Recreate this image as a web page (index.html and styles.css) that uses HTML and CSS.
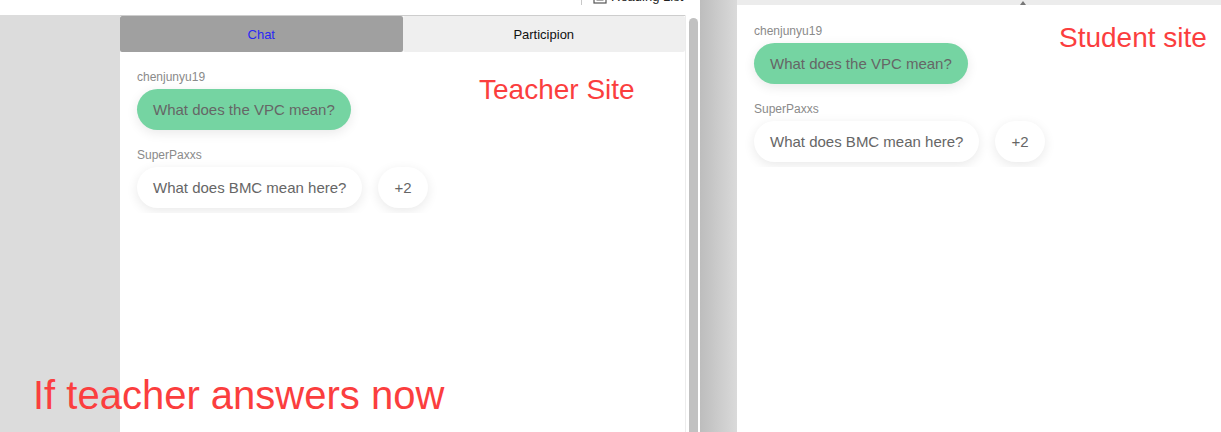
FILE: index.html
```html
<!DOCTYPE html>
<html lang="en">
<head>
<meta charset="utf-8">
<title>Teacher vs Student site</title>
<link rel="stylesheet" href="styles.css">
</head>
<body>
  <div class="teacher">
    <div class="toolbar">
      <div class="reading">
        <span class="sep"></span>
        <svg class="rl-icon" width="14" height="14" viewBox="0 0 14 14"><rect x="1" y="1" width="12" height="12" fill="none" stroke="#555" stroke-width="1.2"/><line x1="3.5" y1="4" x2="10.5" y2="4" stroke="#555"/><line x1="3.5" y1="7" x2="10.5" y2="7" stroke="#555"/><line x1="3.5" y1="10" x2="10.5" y2="10" stroke="#555"/></svg>
        <span class="rl-text">Reading List</span>
      </div>
    </div>
    <div class="teacher-body">
      <div class="sidebar"></div>
      <div class="panel">
        <div class="tabs">
          <div class="tab tab-active">Chat</div>
          <div class="tab">Participion</div>
        </div>
        <div class="chat">
          <div class="msg">
            <div class="name">chenjunyu19</div>
            <div class="row"><div class="bubble green">What does the VPC mean?</div></div>
          </div>
          <div class="msg">
            <div class="name">SuperPaxxs</div>
            <div class="row"><div class="bubble">What does BMC mean here?</div><div class="bubble">+2</div></div>
          </div>
        </div>
      </div>
      <div class="scrollbar"><div class="thumb"></div></div>
    </div>
  </div>
  <div class="divider"></div>
  <div class="student">
    <div class="strip"><span class="caret"></span></div>
    <div class="chat">
      <div class="msg">
        <div class="name">chenjunyu19</div>
        <div class="row"><div class="bubble green">What does the VPC mean?</div></div>
      </div>
      <div class="msg">
        <div class="name">SuperPaxxs</div>
        <div class="row"><div class="bubble">What does BMC mean here?</div><div class="bubble">+2</div></div>
      </div>
    </div>
  </div>

  <div class="note note-teacher">Teacher Site</div>
  <div class="note note-student">Student site</div>
  <div class="note note-big">If teacher answers now</div>
</body>
</html>
```

FILE: styles.css
```css
html, body {
  margin: 0;
  padding: 0;
}
body {
  width: 1221px;
  height: 432px;
  overflow: hidden;
  display: flex;
  position: relative;
  font-family: "Liberation Sans", Arial, sans-serif;
  background: #ffffff;
}

.teacher {
  width: 700px;
  display: flex;
  flex-direction: column;
}
.toolbar {
  height: 15px;
  background: #ffffff;
  overflow: hidden;
  display: flex;
}
.reading {
  margin-left: 581px;
  margin-top: -10px;
  display: flex;
  align-items: flex-start;
  font-size: 13px;
  color: #222;
}
.sep {
  width: 1px;
  height: 15px;
  background: #c8c8c8;
  margin-right: 11px;
}
.rl-icon {
  margin-right: 4px;
}
.rl-text {
  line-height: 14px;
}

.teacher-body {
  flex: 1;
  display: flex;
}
.sidebar {
  width: 120px;
  background: #dcdcdc;
}
.panel {
  width: 565px;
  background: #ffffff;
  display: flex;
  flex-direction: column;
}
.tabs {
  display: flex;
  height: 36px;
  border-top: 1px solid #cdcdcd;
}
.tab {
  flex: 1;
  display: flex;
  align-items: center;
  justify-content: center;
  font-size: 13px;
  color: #111;
  background: #efefef;
  border-radius: 2px;
}
.tab-active {
  background: #a0a0a0;
  color: #2828f5;
}

.scrollbar {
  width: 15px;
  background: #ffffff;
  border-left: 1px solid #ececec;
  box-sizing: border-box;
  display: flex;
  justify-content: center;
  padding-top: 3px;
}
.thumb {
  width: 9px;
  margin-left: 1px;
  height: 100%;
  background: #c1c1c1;
  border-radius: 5px 5px 0 0;
}

.divider {
  width: 37px;
  background: linear-gradient(to right, #bdbdbd, #dadada);
}

.student {
  flex: 1;
  display: flex;
  flex-direction: column;
  background: #ffffff;
}
.strip {
  height: 5px;
  background: #ececec;
  display: flex;
  align-items: flex-end;
}
.caret {
  margin-left: 283px;
  width: 0;
  height: 0;
  border-left: 3px solid transparent;
  border-right: 3px solid transparent;
  border-bottom: 4px solid #777;
}

.chat {
  width: fit-content;
  overflow: hidden;
  padding: 18px 15px 5px 17px;
  display: flex;
  flex-direction: column;
  gap: 18px;
}
.student .chat {
  padding-top: 19px;
}
.name {
  font-size: 12px;
  line-height: 14px;
  color: #8a8a8a;
  margin-bottom: 5px;
}
.row {
  display: flex;
  gap: 16px;
}
.bubble {
  font-size: 15px;
  line-height: 17px;
  padding: 12px 16px;
  border-radius: 21px;
  color: #666666;
  background: #ffffff;
  box-shadow: 0 3px 12px rgba(0, 0, 0, 0.09);
}
.bubble.green {
  background: #75d4a2;
}

.note {
  position: absolute;
  color: #fb3e3e;
  line-height: 1;
  white-space: nowrap;
}
.note-teacher {
  left: 479px;
  top: 76px;
  font-size: 28px;
}
.note-student {
  left: 1059px;
  top: 24px;
  font-size: 28px;
}
.note-big {
  left: 33px;
  top: 375px;
  font-size: 40px;
}
```
